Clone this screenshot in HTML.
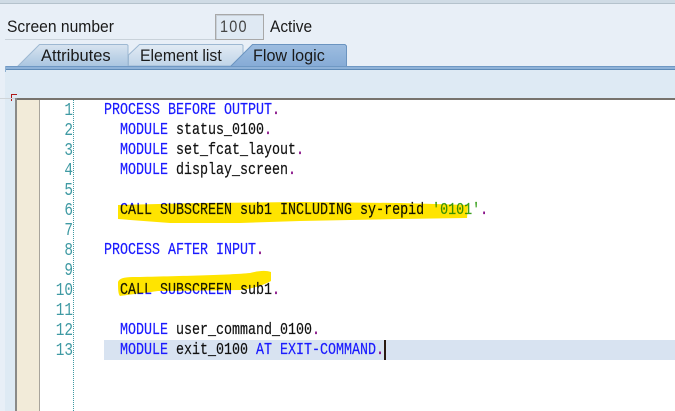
<!DOCTYPE html>
<html><head><meta charset="utf-8">
<style>
html,body{margin:0;padding:0;background:#e8eff7}
#p{position:relative;width:675px;height:411px;overflow:hidden;background:#e8eff7;font-family:"Liberation Sans",sans-serif}
.a{position:absolute}
.t{position:absolute;font-size:17px;color:#1a1a1a;white-space:pre;line-height:20px;transform-origin:0 50%}
.n{position:absolute;left:33px;width:40px;text-align:right;font:18px/20px "Liberation Mono",monospace;color:#3f9aa3;transform:scaleX(.8);transform-origin:100% 50%}
.l{position:absolute;left:104px;font:17px/20px "Liberation Mono",monospace;color:#111;white-space:pre;transform:scaleX(.7843);transform-origin:0 50%;-webkit-text-stroke:.2px currentColor}
b{font-weight:normal;color:#1a1aff}
i{font-style:normal;color:#800080}
u{text-decoration:none;color:#3aa01e}
</style></head><body><div id="p">
<div class="a" style="left:0;top:0;width:675px;height:3px;background:#cfdbe5;border-bottom:1px solid #b4c2cc"></div>
<div class="a" style="left:5px;top:39px;width:210px;height:1px;background:#c9d2da"></div>
<div class="t" style="left:7px;top:17px;transform:scaleX(.92)">Screen number</div>
<div class="a" style="left:215px;top:14px;width:47px;height:24px;background:#dfe9f3;border:1px solid #a8a8a8;box-shadow:inset 1px 1px 0 #c8d0d8"></div>
<div class="t" style="left:220px;top:17px;transform:scaleX(.85);letter-spacing:1.4px;color:#444">100</div>
<div class="t" style="left:270px;top:17px;transform:scaleX(.91)">Active</div>

<div class="a" style="left:5px;top:70px;width:670px;height:29px;background:#deeaf4"></div>
<div class="a" style="left:5px;top:99px;width:670px;height:312px;background:#deeaf4"></div>
<svg class="a" style="left:0;top:40px" width="675" height="32" viewBox="0 0 675 32">
<defs>
<linearGradient id="g1" x1="0" y1="0" x2="0" y2="1"><stop offset="0" stop-color="#d8e4f0"/><stop offset="1" stop-color="#a9c5e0"/></linearGradient>
<linearGradient id="g2" x1="0" y1="0" x2="0" y2="1"><stop offset="0" stop-color="#e2ebf4"/><stop offset="1" stop-color="#c0d4e8"/></linearGradient>
<linearGradient id="g3" x1="0" y1="0" x2="0" y2="1"><stop offset="0" stop-color="#9dbde0"/><stop offset="1" stop-color="#86abd6"/></linearGradient>
</defs>
<path d="M17.5 26.5 L39.5 4.5 H127 L128 5.5 V26.5 Z" fill="url(#g1)" stroke="#9db8d2"/>
<path d="M128.5 26 V15 L139.5 4.5 H242 L243 5.5 V26 Z" fill="url(#g2)" stroke="#9db8d2"/>
<path d="M230.5 26.5 L252.5 4.5 H345 L346.5 6 V26.5 Z" fill="url(#g3)" stroke="#6b94c0"/>
<rect x="5" y="26" width="670" height="4" fill="#8fb2d8"/>
<rect x="5" y="29" width="670" height="1" fill="#5f8bb8"/>
<rect x="5" y="26" width="670" height="1" fill="#6f98c4"/>
<rect x="5" y="26" width="1" height="6" fill="#8fb0d0"/>
</svg>
<div class="t" style="left:41px;top:46px;transform:scaleX(.97)">Attributes</div>
<div class="t" style="left:140px;top:46px;transform:scaleX(.93)">Element list</div>
<div class="t" style="left:253px;top:46px;transform:scaleX(.95)">Flow logic</div>

<div class="a" style="left:11px;top:94px;width:6px;height:1px;background:#b01818"></div>
<div class="a" style="left:11px;top:94px;width:1px;height:7px;background:#b01818"></div>

<div class="a" style="left:0;top:98px;width:675px;height:1px;background:#cfd4d8"></div>
<div class="a" style="left:15px;top:98px;width:660px;height:2px;background:#77736d"></div>
<div class="a" style="left:15px;top:98px;width:2px;height:313px;background:#8a8a88"></div>
<div class="a" style="left:17px;top:100px;width:22px;height:311px;background:#f2ebd9"></div>
<div class="a" style="left:39px;top:100px;width:1px;height:311px;background:#a8a49c"></div>
<div class="a" style="left:40px;top:100px;width:635px;height:311px;background:#fff"></div>
<div class="a" style="left:73px;top:100px;width:0;height:311px;border-left:1px dotted #3f9aa3"></div>
<div class="a" style="left:104px;top:340px;width:571px;height:20px;background:#d8e3f1"></div>

<div class="n" style="top:101px">1</div>
<div class="n" style="top:121px">2</div>
<div class="n" style="top:141px">3</div>
<div class="n" style="top:161px">4</div>
<div class="n" style="top:181px">5</div>
<div class="n" style="top:201px">6</div>
<div class="n" style="top:221px">7</div>
<div class="n" style="top:241px">8</div>
<div class="n" style="top:261px">9</div>
<div class="n" style="top:281px">10</div>
<div class="n" style="top:301px">11</div>
<div class="n" style="top:321px">12</div>
<div class="n" style="top:341px">13</div>

<div class="l" style="top:101px"><b>PROCESS BEFORE OUTPUT</b><i>.</i></div>
<div class="l" style="top:121px">  <b>MODULE</b> status_0100<i>.</i></div>
<div class="l" style="top:141px">  <b>MODULE</b> set_fcat_layout<i>.</i></div>
<div class="l" style="top:161px">  <b>MODULE</b> display_screen<i>.</i></div>
<div class="l" style="top:201px">  <b>CALL SUBSCREEN</b> sub1 <b>INCLUDING</b> sy-repid <u>'0101'</u><i>.</i></div>
<div class="l" style="top:241px"><b>PROCESS AFTER INPUT</b><i>.</i></div>
<div class="l" style="top:281px">  <b>CALL SUBSCREEN</b> sub1<i>.</i></div>
<div class="l" style="top:321px">  <b>MODULE</b> user_command_0100<i>.</i></div>
<div class="l" style="top:341px">  <b>MODULE</b> exit_0100 <b>AT EXIT-COMMAND</b><i>.</i></div>
<div class="a" style="left:384px;top:340px;width:2px;height:20px;background:#2a1a10"></div>

<svg class="a" style="left:0;top:0;mix-blend-mode:multiply" width="675" height="411" viewBox="0 0 675 411">
<path d="M118 205 L200 203 L300 202 L400 203 L468 205 L467 218 L400 219 L300 221 L240 223 L170 223 L118 219 Z" fill="#ffe400"/>
<path d="M118 282 C120 277 127 277 140 277 C180 276 230 275 250 273 C258 271 265 270 271 272 L271 281 C262 286 250 289 240 290 L158 291 C145 293 125 295 120 296 C118 294 118 288 118 282 Z" fill="#ffe400"/>
</svg>
</div></body></html>
